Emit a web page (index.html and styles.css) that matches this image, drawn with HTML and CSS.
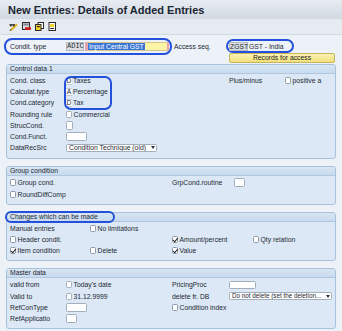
FILE: index.html
```html
<!DOCTYPE html>
<html lang="en">
  <head>
    <meta charset="UTF-8" />
    <meta name="viewport" content="width=device-width, initial-scale=1.0" />
    <title>New Entries: Details of Added Entries</title>
    <link rel="stylesheet" href="styles.css">
  </head>
  <body>
    <div class="titlebar">New Entries: Details of Added Entries</div>

    <!-- Toolbar -->
    <div class="toolbar">
      <svg class="icon" viewBox="0 0 9 9">
        <path d="M2.2 8 L8 2.2" stroke="#e2b11d" stroke-width="2" />
        <path d="M1 8.6 L2.3 7.3" stroke="#5a4a20" stroke-width="1.2" />
        <path d="M0.5 2.6 h5.5" stroke="#222" stroke-width="0.8" />
        <circle cx="1.8" cy="3.4" r="1.1" fill="#333" />
        <circle cx="4.6" cy="3.4" r="1.1" fill="#333" />
      </svg>
      <svg class="icon" viewBox="0 0 9 9">
        <rect x="0.5" y="0.5" width="7" height="7" fill="#d9dcdf" stroke="#2b2b2b" />
        <rect x="1.5" y="1.5" width="5" height="2" fill="#7c8690" />
        <rect x="3" y="5.2" width="6" height="2.6" fill="#d2201c" />
      </svg>
      <svg class="icon" viewBox="0 0 9 9">
        <rect x="3" y="0.5" width="5.5" height="6" fill="#fff" stroke="#2b2b2b" />
        <rect x="0.5" y="2.5" width="5.5" height="6" fill="#f2cf2a" stroke="#2b2b2b" />
        <rect x="1.8" y="4" width="3" height="1.2" fill="#2b2b2b" />
      </svg>
      <svg class="icon" viewBox="0 0 9 9">
        <rect x="1" y="0.5" width="6.5" height="8" fill="#fff" stroke="#2b2b2b" />
        <rect x="2.2" y="2" width="4" height="3" fill="#f2cf2a" />
        <rect x="2.2" y="6" width="4" height="1" fill="#2b2b2b" />
      </svg>
    </div>

    <!-- Key fields -->
    <div class="keyrow">
      <div class="key-box">
        <span class="key-label">Condit. type</span>
        <span class="code">ADIC</span>
        <span class="name-fld"><span class="sel">Input Central GST</span></span>
      </div>
      <span class="access-label">Access seq.</span>
      <div class="access">
        <div class="access-box">
          <span class="code code-sans">ZGST</span>
          <span>GST - India</span>
        </div>
        <button class="records">Records for access</button>
      </div>
    </div>

    <!-- Control data 1 -->
    <div class="group group-control">
      <div class="group-head">Control data 1</div>
      <div class="group-body">
        <div class="row">
          <span class="at-a">Cond. class</span>
          <span class="at-b span-2 cell"><span class="chr">D</span>Taxes</span>
          <span class="at-e span-2">Plus/minus</span>
          <span class="at-g cell"><span class="cb"></span>positive a</span>
        </div>
        <div class="row">
          <span class="at-a">Calculat.type</span>
          <span class="at-b span-2 cell"><span class="chr">A</span>Percentage</span>
        </div>
        <div class="row">
          <span class="at-a">Cond.category</span>
          <span class="at-b span-2 cell"><span class="chr">D</span>Tax</span>
        </div>
        <div class="row">
          <span class="at-a">Rounding rule</span>
          <span class="at-b span-2 cell"><span class="fld fld-xs"></span>Commercial</span>
        </div>
        <div class="row">
          <span class="at-a">StrucCond.</span>
          <span class="at-b cell"><span class="fld fld-sq"></span></span>
        </div>
        <div class="row">
          <span class="at-a">Cond.Funct.</span>
          <span class="at-b span-2 cell"><span class="fld fld-m"></span></span>
        </div>
        <div class="row">
          <span class="at-a">DataRecSrc</span>
          <span class="at-b span-2 dd dd-src"><span class="dd-text">Condition Technique (old)</span></span>
        </div>
      </div>
      <div class="mark mark-ctl"></div>
    </div>

    <!-- Group condition -->
    <div class="group group-cond">
      <div class="group-head">Group condition</div>
      <div class="group-body">
        <div class="row">
          <span class="at-a span-3 cell"><span class="cb"></span>Group cond.</span>
          <span class="at-d">GrpCond.routine</span>
          <span class="at-e cell"><span class="fld fld-s fld-push"></span></span>
        </div>
        <div class="row">
          <span class="at-a span-3 cell"><span class="cb"></span>RoundDiffComp</span>
        </div>
      </div>
    </div>

    <!-- Changes which can be made -->
    <div class="group">
      <div class="group-head">Changes which can be made</div>
      <div class="group-body">
        <div class="row">
          <span class="at-a">Manual entries</span>
          <span class="at-c cell"><span class="cb"></span>No limitations</span>
        </div>
        <div class="row">
          <span class="at-a span-3 cell"><span class="cb"></span>Header condit.</span>
          <span class="at-d span-2 cell"><span class="cb on"></span>Amount/percent</span>
          <span class="at-f span-2 cell"><span class="cb"></span>Qty relation</span>
        </div>
        <div class="row">
          <span class="at-a span-2 cell"><span class="cb on"></span>Item condition</span>
          <span class="at-c cell"><span class="cb"></span>Delete</span>
          <span class="at-d cell"><span class="cb on"></span>Value</span>
        </div>
      </div>
      <div class="mark mark-chg"></div>
    </div>

    <!-- Master data -->
    <div class="group">
      <div class="group-head">Master data</div>
      <div class="group-body">
        <div class="row">
          <span class="at-a">valid from</span>
          <span class="at-b span-2 cell"><span class="fld fld-xs"></span>Today's date</span>
          <span class="at-d">PricingProc</span>
          <span class="at-e span-2 cell"><span class="fld fld-l"></span></span>
        </div>
        <div class="row">
          <span class="at-a">Valid to</span>
          <span class="at-b span-2 cell"><span class="fld fld-xs"></span>31.12.9999</span>
          <span class="at-d">delete fr. DB</span>
          <span class="at-e span-3 dd dd-del"><span class="dd-text">Do not delete (set the deletion...</span></span>
        </div>
        <div class="row">
          <span class="at-a">RefConType</span>
          <span class="at-b cell"><span class="fld fld-m"></span></span>
          <span class="at-d span-2 cell"><span class="cb"></span>Condition index</span>
        </div>
        <div class="row">
          <span class="at-a">RefApplicatio</span>
          <span class="at-b cell"><span class="fld fld-s"></span></span>
        </div>
      </div>
    </div>
  </body>
</html>
```

FILE: styles.css
```css
* {
  box-sizing: border-box;
}

body {
  margin: 0;
  width: 342px;
  height: 331px;
  overflow: hidden;
  background: #edf2f8;
  font-family: "Liberation Sans", Arial, sans-serif;
  font-size: 6.8px;
  color: #1d2834;
}

.titlebar {
  height: 19px;
  padding: 1px 0 0 8px;
  line-height: 18px;
  font-size: 11px;
  font-weight: bold;
  color: #1b2633;
  background: linear-gradient(#e7ecf1, #d1d9e2);
  white-space: nowrap;
}

.toolbar {
  height: 16px;
  display: flex;
  align-items: center;
  gap: 4px;
  padding-left: 9px;
  background: #e6ebf1;
  border-bottom: 1px solid #d3dbe5;
}

.icon {
  width: 9px;
  height: 9px;
  display: block;
}

/* key fields */
.keyrow {
  display: flex;
  align-items: flex-start;
  height: 25px;
  margin-top: 3px;
}

.key-box {
  display: flex;
  align-items: center;
  width: 168px;
  height: 17px;
  margin-left: 4px;
  padding-left: 4px;
  border: 2px solid #2351dc;
  border-radius: 8px;
}

.key-label {
  width: 56px;
}

.code {
  width: 18px;
  height: 9px;
  background: #dde0e3;
  border: 1px solid #b4bac2;
  font-family: "Liberation Mono", monospace;
  font-size: 7px;
  line-height: 7px;
  text-align: center;
}

.code-sans {
  width: 19px;
  margin-right: 1px;
  font-family: "Liberation Sans", Arial, sans-serif;
  font-size: 6.8px;
}

.name-fld {
  display: flex;
  align-items: center;
  width: 84px;
  height: 9px;
  margin-left: 1px;
  background: #fbf3a6;
  border: 1px solid #d6c58a;
  border-left: 3px solid #e8a4ad;
  border-right: 2px solid #e8a4ad;
}

.sel {
  background: #3a76d6;
  color: #fff;
  padding: 0 1px;
  line-height: 7px;
}

.access-label {
  width: 52px;
  margin-left: 2px;
  line-height: 17px;
}

.access {
  margin-top: 1px;
}

.access-box {
  display: flex;
  align-items: center;
  width: 68px;
  height: 14px;
  padding-left: 1px;
  border: 2px solid #2351dc;
  border-radius: 7px;
}

.records {
  display: block;
  width: 106px;
  height: 10px;
  margin: 0 0 0 3px;
  padding: 0;
  font-family: inherit;
  font-size: 6.8px;
  line-height: 8px;
  color: #222;
  background: linear-gradient(#fbf3b3, #f0e07c);
  border: 1px solid #c6b35c;
  border-radius: 2px;
}

/* groups */
.group {
  position: relative;
  margin: 7px 6px 0;
  background: #dce8f5;
  border: 1px solid #a9c2dc;
  border-radius: 3px;
}

.group-control {
  margin-top: 1px;
}

.group-head {
  height: 9px;
  padding-left: 3px;
  line-height: 8px;
  background: linear-gradient(#d8e6f3, #c8daed);
  border-bottom: 1px solid #b1c7df;
  border-radius: 2px 2px 0 0;
}

.group-body {
  padding: 1px 3px 4px;
}

.group-control .group-body {
  padding-bottom: 5px;
}

.row {
  display: grid;
  grid-template-columns: 56px 24px 82px 57px 24px 32px 1fr;
  align-items: center;
  height: 11.2px;
  white-space: nowrap;
}

.at-a { grid-column: 1; }
.at-b { grid-column: 2; }
.at-c { grid-column: 3; }
.at-d { grid-column: 4; }
.at-e { grid-column: 5; }
.at-f { grid-column: 6; }
.at-g { grid-column: 7; }

.span-2 { grid-column-end: span 2; }
.span-3 { grid-column-end: span 3; }

.cell {
  display: flex;
  align-items: center;
}

/* checkboxes */
.cb {
  flex: none;
  width: 6px;
  height: 7px;
  margin-right: 1.5px;
  background: #fff;
  border: 1px solid #8d99a7;
  border-radius: 1.5px;
}

.cb.on::after {
  content: "";
  display: block;
  width: 2px;
  height: 3.5px;
  margin: 0 0 0 1.2px;
  border: solid #222;
  border-width: 0 1px 1px 0;
  transform: rotate(40deg);
}

/* input fields */
.chr {
  flex: none;
  width: 6px;
  height: 8px;
  margin-right: 1px;
  background: #fff;
  border-top: 1px solid #c3cbd4;
  border-bottom: 1px solid #c3cbd4;
  line-height: 6px;
  text-align: center;
}

.fld {
  flex: none;
  height: 8px;
  background: #fff;
  border: 1px solid #a3aebb;
  border-radius: 1.5px;
}

.fld-xs {
  width: 6px;
  height: 7px;
  margin-right: 1.5px;
}

.fld-sq {
  width: 7px;
  height: 9px;
}

.fld-s {
  width: 11px;
  height: 9px;
}

.fld-m {
  width: 21px;
  height: 9px;
}

.fld-l {
  width: 27px;
}

.fld-push {
  margin-left: 5px;
}

/* dropdowns */
.dd {
  display: flex;
  align-items: center;
  height: 8px;
  padding-left: 2px;
  background: #fff;
  border: 1px solid #a3aebb;
  border-radius: 1.5px;
  overflow: hidden;
}

.dd-src {
  width: 91px;
}

.dd-del {
  font-size: 6.3px;
}

.dd-text {
  flex: 1;
  min-width: 0;
  overflow: hidden;
  line-height: 6px;
}

.dd::after {
  content: "";
  flex: none;
  margin: 0 1px 0 1px;
  border-left: 2.5px solid transparent;
  border-right: 2.5px solid transparent;
  border-top: 3px solid #2a3440;
}

/* blue marks drawn over the screen */
.mark {
  position: absolute;
  border: 2px solid #2351dc;
  border-radius: 7px;
  pointer-events: none;
}

.mark-ctl {
  left: 57px;
  top: 11px;
  width: 48px;
  height: 34px;
}

.mark-chg {
  left: -2px;
  top: -2px;
  width: 110px;
  height: 12px;
}
```
